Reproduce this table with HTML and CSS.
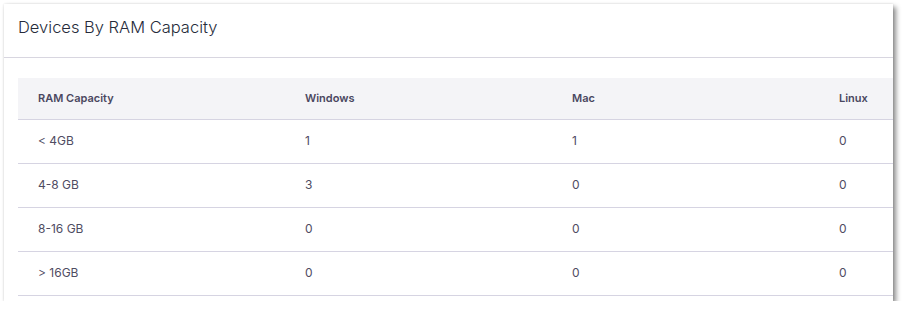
FILE: index.html
```html
<!DOCTYPE html>
<html>
<head>
<meta charset="utf-8">
<link rel="stylesheet" href="styles.css">
</head>
<body>
<div class="card">
  <div class="card-header">
    <h2 class="title">Devices By RAM Capacity</h2>
  </div>
  <div class="card-body">
    <table class="data">
      <thead>
        <tr><th>RAM Capacity</th><th>Windows</th><th>Mac</th><th>Linux</th></tr>
      </thead>
      <tbody>
        <tr><td>&lt; 4GB</td><td>1</td><td>1</td><td>0</td></tr>
        <tr><td>4-8 GB</td><td>3</td><td>0</td><td>0</td></tr>
        <tr><td>8-16 GB</td><td>0</td><td>0</td><td>0</td></tr>
        <tr><td>&gt; 16GB</td><td>0</td><td>0</td><td>0</td></tr>
      </tbody>
    </table>
  </div>
</div>
</body>
</html>
```
FILE: styles.css
```css
html, body {
  margin: 0;
  padding: 0;
  background: #ffffff;
}
body {
  padding: 4px 0 0 4px;
  font-family: Inter, "Noto Sans", sans-serif;
}
.card {
  width: 889px;
  height: 297px;
  background: #ffffff;
  box-shadow: 3px 3px 5px rgba(0, 0, 0, 0.45), 0 0 2px rgba(0, 0, 0, 0.12);
  overflow: hidden;
  box-sizing: border-box;
}
.card-header {
  height: 54px;
  border-bottom: 1px solid #d8d6e0;
  display: flex;
  align-items: center;
  padding-left: 14px;
  box-sizing: border-box;
}
.title {
  margin: 0;
  font-size: 16.5px;
  font-weight: 300;
  color: #262b3a;
  line-height: 1;
  position: relative;
  top: -3px;
}
.card-body {
  padding: 20px 0 0 14px;
}
.data {
  border-collapse: collapse;
  table-layout: fixed;
  width: 1068px;
}
.data th, .data td {
  width: 267px;
  text-align: left;
  padding: 0 0 0 20px;
  border-bottom: 1px solid #d6d4e2;
  box-sizing: border-box;
}
.data th {
  height: 41px;
  background: #f4f4f7;
  font-size: 11px;
  font-weight: 600;
  color: #4a4760;
}
.data td {
  height: 44px;
  padding-bottom: 2px;
  font-size: 12px;
  font-weight: 400;
  color: #4f4c62;
}
```
